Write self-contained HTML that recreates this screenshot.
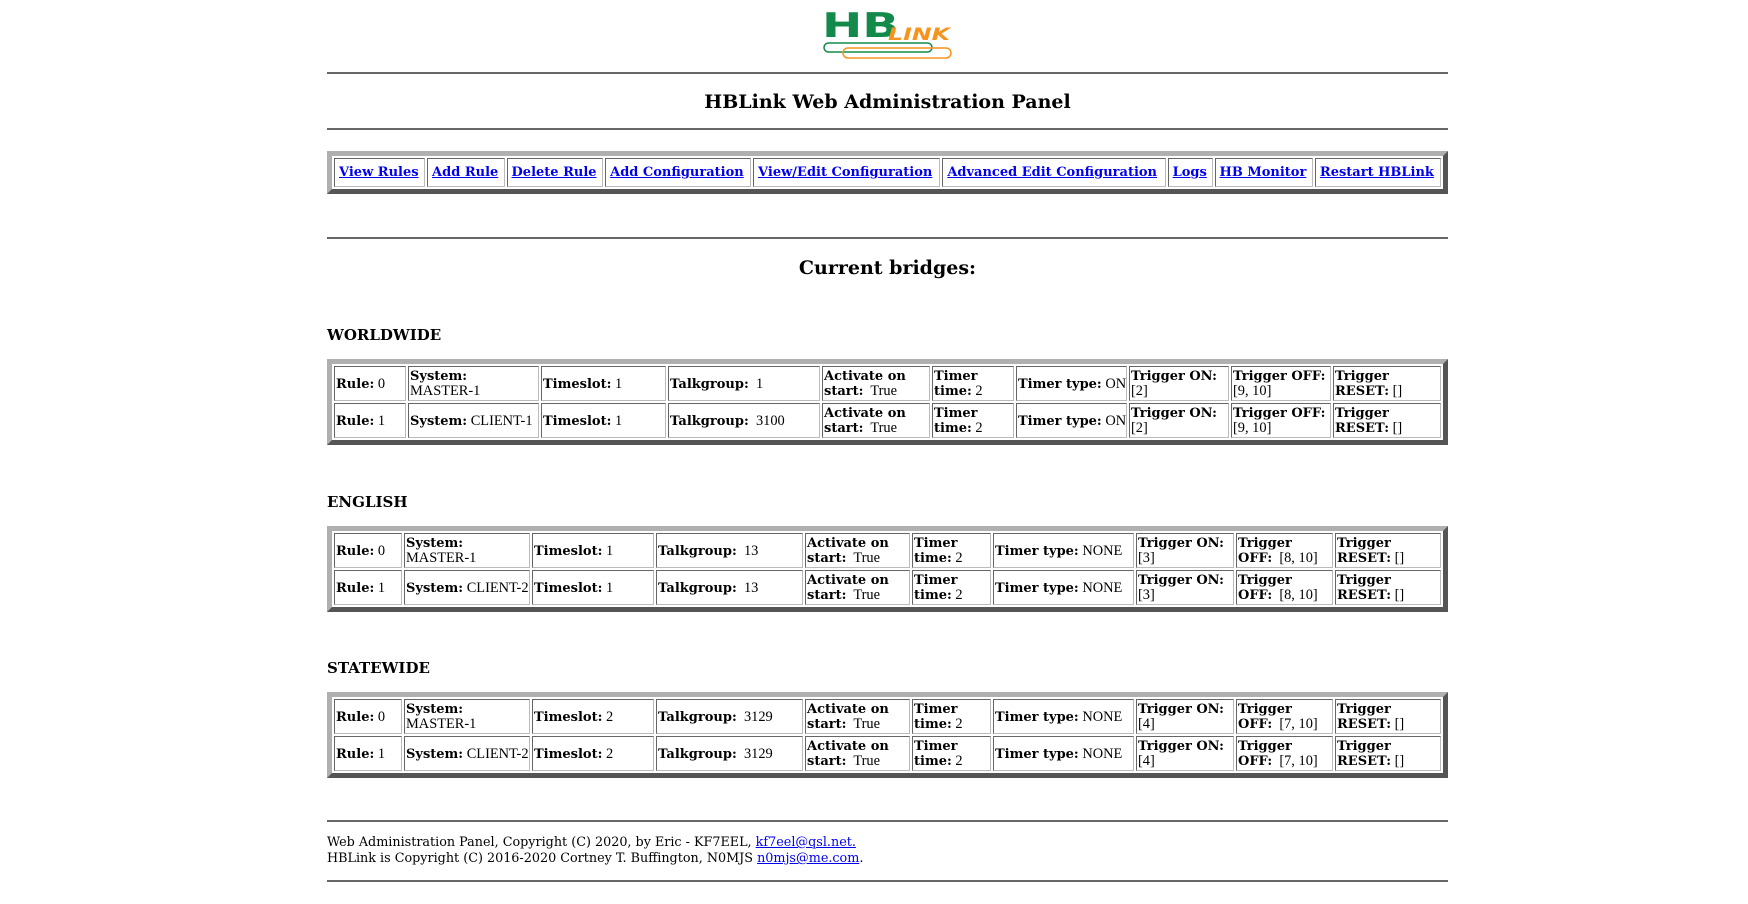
<!DOCTYPE html>
<html><head><meta charset="utf-8"><style>
body{margin:0;font-family:"Liberation Serif","DejaVu Serif",serif;font-size:14.4px;color:#000;background:#fff;position:relative;width:1748px;height:904px;overflow:hidden}
b{font-family:"DejaVu Serif",serif;font-weight:bold;font-size:13px}
.nav a{font-family:"DejaVu Serif",serif;font-weight:bold;font-size:13px}
.a{position:absolute;left:327px;width:1121px}
.hr{height:0;border-top:2px solid #666}
.h1{font-family:"DejaVu Serif",serif;font-weight:bold;font-size:19px;text-align:center;line-height:24px}
table.t{border:5px solid;border-color:#b0b0b0 #555 #555 #b0b0b0;border-spacing:2px;width:1121px;box-sizing:border-box}
table.t td{border:1px solid;border-color:#666 #bbb #bbb #666;padding:2px 1px 1px;line-height:15px;vertical-align:middle;overflow:hidden}
table.fx{table-layout:fixed}
table.nav td{padding:5px 4px;line-height:16px;white-space:nowrap}
a{color:#00e;text-decoration:underline}
.h3{font-family:"DejaVu Serif",serif;font-weight:bold;font-size:15px;line-height:18px}
.foot{line-height:16px;font-family:"DejaVu Serif",serif;font-size:12.75px}
</style></head><body>
<div style="position:absolute;left:822px;top:6px">
<svg width="135" height="54" viewBox="0 0 135 54">
<text x="0" y="31" font-family="DejaVu Sans" font-weight="bold" font-size="34" fill="#128a4a" textLength="77" lengthAdjust="spacingAndGlyphs">HB</text>
<text x="66" y="34" font-family="DejaVu Sans" font-weight="bold" font-style="italic" font-size="17" fill="#f7941d" textLength="62" lengthAdjust="spacingAndGlyphs">LINK</text>
<rect x="2" y="37" width="108" height="9" rx="4.5" fill="none" stroke="#128a4a" stroke-width="1.5"/>
<rect x="21" y="42" width="108" height="10" rx="5" fill="none" stroke="#f7941d" stroke-width="1.5"/>
</svg></div>
<div class="a hr" style="top:72px"></div>
<div class="a h1" style="top:90px">HBLink Web Administration Panel</div>
<div class="a hr" style="top:128px"></div>
<table class="a t nav" style="top:151px"><tr>
<td><a>View Rules</a></td><td><a>Add Rule</a></td><td><a>Delete Rule</a></td><td><a>Add Configuration</a></td><td><a>View/Edit Configuration</a></td><td><a>Advanced Edit Configuration</a></td><td><a>Logs</a></td><td><a>HB Monitor</a></td><td><a>Restart HBLink</a></td>
</tr></table>
<div class="a hr" style="top:237px"></div>
<div class="a h1" style="top:256px">Current bridges:</div>
<div class="a h3" style="top:326px">WORLDWIDE</div>
<table class="a t fx" style="top:359px">
<colgroup><col style="width:72px"><col style="width:131px"><col style="width:125px"><col style="width:152px"><col style="width:108px"><col style="width:82px"><col style="width:111px"><col style="width:100px"><col style="width:100px"><col></colgroup>
<tr><td><b>Rule:</b> 0</td><td><b>System:</b><br>MASTER-1</td><td><b>Timeslot:</b> 1</td><td><b>Talkgroup:</b>&nbsp; 1</td><td><b>Activate on</b><br><b>start:</b>&nbsp; True</td><td><b>Timer</b><br><b>time:</b> 2</td><td style="white-space:nowrap"><b>Timer type:</b> ON</td><td><b>Trigger ON:</b><br>[2]</td><td><b>Trigger OFF:</b><br>[9, 10]</td><td><b>Trigger</b><br><b>RESET:</b> []</td></tr>
<tr><td><b>Rule:</b> 1</td><td style="white-space:nowrap"><b>System:</b> CLIENT-1</td><td><b>Timeslot:</b> 1</td><td><b>Talkgroup:</b>&nbsp; 3100</td><td><b>Activate on</b><br><b>start:</b>&nbsp; True</td><td><b>Timer</b><br><b>time:</b> 2</td><td style="white-space:nowrap"><b>Timer type:</b> ON</td><td><b>Trigger ON:</b><br>[2]</td><td><b>Trigger OFF:</b><br>[9, 10]</td><td><b>Trigger</b><br><b>RESET:</b> []</td></tr>
</table>
<div class="a h3" style="top:493px">ENGLISH</div>
<table class="a t fx" style="top:526px">
<colgroup><col style="width:68px"><col style="width:126px"><col style="width:122px"><col style="width:147px"><col style="width:105px"><col style="width:79px"><col style="width:141px"><col style="width:98px"><col style="width:97px"><col></colgroup>
<tr><td><b>Rule:</b> 0</td><td><b>System:</b><br>MASTER-1</td><td><b>Timeslot:</b> 1</td><td><b>Talkgroup:</b>&nbsp; 13</td><td><b>Activate on</b><br><b>start:</b>&nbsp; True</td><td><b>Timer</b><br><b>time:</b> 2</td><td><b>Timer type:</b> NONE</td><td><b>Trigger ON:</b><br>[3]</td><td><b>Trigger</b><br><b>OFF:</b>&nbsp; [8, 10]</td><td><b>Trigger</b><br><b>RESET:</b> []</td></tr>
<tr><td><b>Rule:</b> 1</td><td style="white-space:nowrap"><b>System:</b> CLIENT-2</td><td><b>Timeslot:</b> 1</td><td><b>Talkgroup:</b>&nbsp; 13</td><td><b>Activate on</b><br><b>start:</b>&nbsp; True</td><td><b>Timer</b><br><b>time:</b> 2</td><td><b>Timer type:</b> NONE</td><td><b>Trigger ON:</b><br>[3]</td><td><b>Trigger</b><br><b>OFF:</b>&nbsp; [8, 10]</td><td><b>Trigger</b><br><b>RESET:</b> []</td></tr>
</table>
<div class="a h3" style="top:659px">STATEWIDE</div>
<table class="a t fx" style="top:692px">
<colgroup><col style="width:68px"><col style="width:126px"><col style="width:122px"><col style="width:147px"><col style="width:105px"><col style="width:79px"><col style="width:141px"><col style="width:98px"><col style="width:97px"><col></colgroup>
<tr><td><b>Rule:</b> 0</td><td><b>System:</b><br>MASTER-1</td><td><b>Timeslot:</b> 2</td><td><b>Talkgroup:</b>&nbsp; 3129</td><td><b>Activate on</b><br><b>start:</b>&nbsp; True</td><td><b>Timer</b><br><b>time:</b> 2</td><td><b>Timer type:</b> NONE</td><td><b>Trigger ON:</b><br>[4]</td><td><b>Trigger</b><br><b>OFF:</b>&nbsp; [7, 10]</td><td><b>Trigger</b><br><b>RESET:</b> []</td></tr>
<tr><td><b>Rule:</b> 1</td><td style="white-space:nowrap"><b>System:</b> CLIENT-2</td><td><b>Timeslot:</b> 2</td><td><b>Talkgroup:</b>&nbsp; 3129</td><td><b>Activate on</b><br><b>start:</b>&nbsp; True</td><td><b>Timer</b><br><b>time:</b> 2</td><td><b>Timer type:</b> NONE</td><td><b>Trigger ON:</b><br>[4]</td><td><b>Trigger</b><br><b>OFF:</b>&nbsp; [7, 10]</td><td><b>Trigger</b><br><b>RESET:</b> []</td></tr>
</table>
<div class="a hr" style="top:820px"></div>
<div class="a foot" style="top:835px">Web Administration Panel, Copyright (C) 2020, by Eric - KF7EEL, <a>kf7eel@qsl.net.</a><br>HBLink is Copyright (C) 2016-2020 Cortney T. Buffington, N0MJS <a>n0mjs@me.com</a>.</div>
<div class="a hr" style="top:880px"></div>
</body></html>
